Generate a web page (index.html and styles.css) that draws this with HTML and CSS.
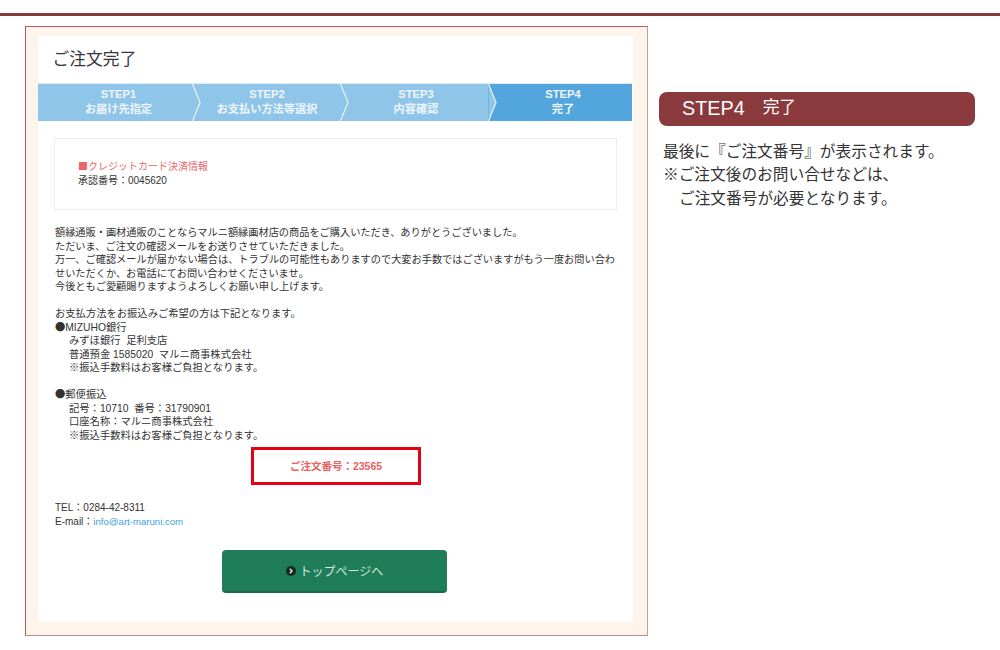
FILE: index.html
```html
<!DOCTYPE html>
<html lang="ja">
<head>
<meta charset="utf-8">
<title>ご注文完了</title>
<link rel="stylesheet" href="styles.css">
</head>
<body>
<div class="topline"></div>
<div class="page">
  <main class="frame">
    <div class="card">
      <h1 class="title">ご注文完了</h1>
      <ol class="steps">
        <li class="step s1">STEP1<br>お届け先指定<svg class="chev" viewBox="0 0 10 37"><polyline points="1.5,0 9,18.5 1.5,37"/></svg></li>
        <li class="step s2">STEP2<br>お支払い方法等選択<svg class="chev" viewBox="0 0 10 37"><polyline points="1.5,0 9,18.5 1.5,37"/></svg></li>
        <li class="step s3">STEP3<br>内容確認<svg class="chev" viewBox="0 0 10 37"><polyline points="1.5,0 9,18.5 1.5,37"/></svg></li>
        <li class="step s4">STEP4<br>完了</li>
      </ol>
      <section class="credit">
        <p class="credit-title"><span class="mark">■</span>クレジットカード決済情報</p>
        <p>承認番号：0045620</p>
      </section>
      <section class="message">
        <p class="block">額縁通販・画材通販のことならマルニ額縁画材店の商品をご購入いただき、ありがとうございました。<br>ただいま、ご注文の確認メールをお送りさせていただきました。<br>万一、ご確認メールが届かない場合は、トラブルの可能性もありますので大変お手数ではございますがもう一度お問い合わせいただくか、お電話にてお問い合わせくださいませ。<br>今後ともご愛顧賜りますようよろしくお願い申し上げます。</p>
        <p class="wide">お支払方法をお振込みご希望の方は下記となります。</p>
        <p class="wide"><span class="mark">●</span>MIZUHO銀行</p>
        <p class="block indent wide">みずほ銀行&nbsp;&nbsp;足利支店<br>普通預金 1585020&nbsp;&nbsp;マルニ商事株式会社<br>※振込手数料はお客様ご負担となります。</p>
        <p class="wide"><span class="mark">●</span>郵便振込</p>
        <p class="indent wide">記号：10710&nbsp;&nbsp;番号：31790901<br>口座名称：マルニ商事株式会社<br>※振込手数料はお客様ご負担となります。</p>
      </section>
      <div class="order">ご注文番号：23565</div>
      <p class="contact">TEL：0284-42-8311<br>E-mail：<a href="#">info@art-maruni.com</a></p>
      <a class="top-btn" href="#"><span class="dot"><svg viewBox="0 0 10 10"><polyline points="3.8,2.8 6,5 3.8,7.2"/></svg></span>トップページへ</a>
    </div>
  </main>
  <aside class="side">
    <h2 class="side-head"><span class="side-step">STEP4</span><span>完了</span></h2>
    <p class="side-text">最後に『ご注文番号』が表示されます。<br>※ご注文後のお問い合せなどは、<br><span class="side-indent">ご注文番号が必要となります。</span></p>
  </aside>
</div>
</body>
</html>
```
FILE: styles.css
```css
* { box-sizing: border-box; }
html, body { margin: 0; padding: 0; }
body {
  width: 1000px;
  height: 650px;
  overflow: hidden;
  background: #fff;
  color: #333;
  font-family: "Liberation Sans", "Noto Sans CJK JP", sans-serif;
}
p, h1, h2, ol { margin: 0; padding: 0; font-weight: normal; }
.topline { height: 3px; margin-top: 13px; background: #8a3a3c; }
.page { display: flex; align-items: flex-start; padding: 10px 0 0 25px; }
.frame {
  width: 623px;
  height: 610px;
  padding: 9px 14px 13px 12px;
  background: #fdf5ec;
  border: 1px solid #c89a96;
  border-top-color: #ac5f63;
  border-left-color: #a85a5e;
  border-bottom-color: #c08c88;
}
.card {
  height: 100%;
  background: #fff;
  border-radius: 4px;
  display: flex;
  flex-direction: column;
}
.title {
  height: 47px;
  padding: 12px 0 0 14.5px;
  font-size: 16.8px;
  line-height: 24px;
  color: #3a3440;
}
.steps { display: flex; height: 38px; list-style: none; border-top: 1px solid #dcecf7; }
.step {
  position: relative;
  text-align: center;
  padding-top: 3px;
  color: #eff6fb;
  font-size: 11.2px;
  line-height: 15px;
  font-weight: bold;
  background: #90c5ea;
}
.s1 { width: 154px; padding-left: 7px; z-index: 3; }
.s2 { width: 148px; padding-left: 2px; z-index: 2; }
.s3 { width: 148px; padding-left: 4px; z-index: 1; }
.s4 { width: 144px; padding-left: 6px; background: #52a6dd; }
.chev {
  position: absolute;
  top: 0;
  left: calc(100% - 1px);
  width: 10px;
  height: 37px;
}
.chev polyline { fill: #90c5ea; stroke: #e8f3fb; stroke-width: 1.2; }
.credit {
  margin: 17px 16px 0;
  height: 72px;
  padding: 21px 0 0 23px;
  border: 1px solid #efeeea;
  font-size: 10px;
  line-height: 13.5px;
}
.credit-title { color: #e8686a; }
.mark { font-family: "Noto Sans CJK JP", sans-serif; line-height: 0; }
.message {
  margin: 16px 17px 0 17px;
  font-size: 10.2px;
  line-height: 13.5px;
}
.wide { font-size: 10.3px; }
.block { margin-bottom: 13.5px; }
.indent { padding-left: 14px; }
.order {
  margin: 5px 0 0 213px;
  width: 170px;
  height: 38px;
  border: 3px solid #e60012;
  text-align: center;
  font-size: 10.5px;
  font-weight: bold;
  line-height: 32px;
  color: #ea6266;
}
.contact {
  margin: 16px 0 0 17px;
  font-size: 10px;
  line-height: 14px;
}
.contact a { color: #3aa5d8; text-decoration: none; font-size: 9.6px; }
.top-btn {
  margin: 21px 0 0 184px;
  width: 225px;
  height: 43px;
  display: flex;
  align-items: center;
  justify-content: center;
  gap: 4px;
  background: #1f7d5a;
  border-bottom: 2px solid #1a6b4d;
  border-radius: 4px;
  color: #d4e6de;
  font-size: 12px;
  text-decoration: none;
}
.dot { width: 10px; height: 10px; border-radius: 50%; background: #14291f; display: flex; }
.dot polyline { fill: none; stroke: #e6efe9; stroke-width: 1.4; }
.side { margin: 66px 0 0 11px; width: 316px; }
.side-head {
  display: flex;
  align-items: center;
  gap: 18px;
  height: 34px;
  padding: 0 0 2px 23px;
  background: #8a3a3c;
  border-radius: 8px;
  color: #fff;
  font-size: 16.7px;
  line-height: 32px;
}
.side-step { font-size: 19.8px; }
.side-text {
  margin-top: 14px;
  padding-left: 4px;
  font-size: 15.7px;
  line-height: 23.4px;
  color: #333;
  white-space: nowrap;
}
.side-indent { padding-left: 16px; }
```
